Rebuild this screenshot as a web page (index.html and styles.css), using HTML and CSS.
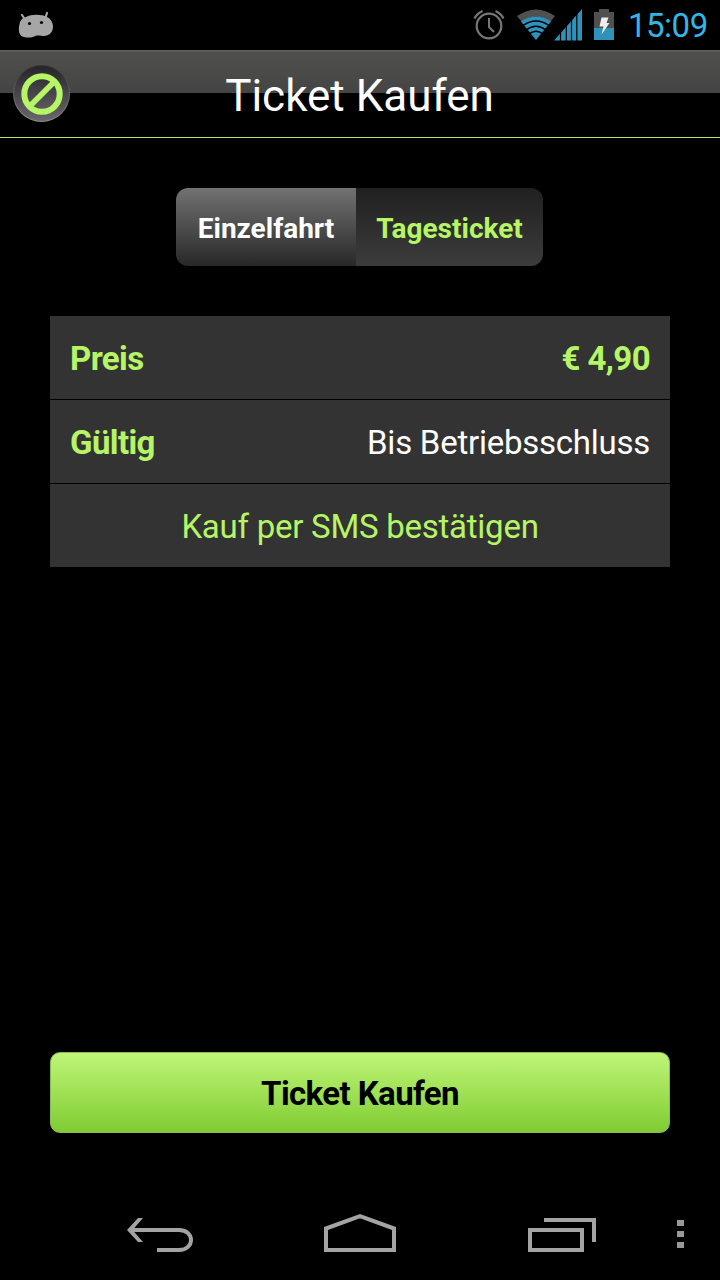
FILE: index.html
```html
<!DOCTYPE html>
<html lang="de">
<head>
    <meta charset="UTF-8">
    <meta name="viewport" content="width=device-width, initial-scale=1.0">
    <title>Ticket Kaufen</title>
    <link rel="stylesheet" href="styles.css">
</head>
<body>
    <div class="status-bar">
        <svg class="icon-android" width="36" height="28" viewBox="0 0 36 28">
            <path d="M4 4l4 6M29 2l-2 6" stroke="#a6a6a6" stroke-width="2.200" stroke-linecap="round"/>
            <path d="M8 6C13 3 24 3 29 6c4 2 6 6 6 10 0 5-4 9-9 9-3 0-5-1-8-.3-4 2-8 2.300-12 1.300-5-1-6-6-4.500-13C2 10 4 7 8 6z" fill="#a6a6a6"/>
            <circle cx="11.500" cy="12.500" r="1.600" fill="#000"/>
            <circle cx="23.500" cy="11.500" r="1.600" fill="#000"/>
        </svg>
        <div class="status-icons">
            <svg class="icon-alarm" width="32" height="32" viewBox="0 0 32 32" fill="none" stroke="#777">
                <circle cx="16" cy="17" r="12.300" stroke-width="2.200"/>
                <path d="M16 9v9l5 5" stroke-width="2"/>
                <path d="M1.500 9.500Q4 4.500 9.500 2M22.500 2Q28 4.500 30.500 9.500" stroke-width="2.200"/>
            </svg>
            <svg class="icon-wifi" width="40" height="32" viewBox="0 0 40 32">
                <path d="M20 31L1 7Q20-6 39 7L34.500 12.800Q20 2.500 5.500 12.800z" fill="#505050"/>
                <path d="M20 31L5 12.500Q20 2.500 35 12.500z" fill="#3092bb"/>
                <g fill="none" stroke="#000" stroke-width="1.400">
                    <path d="M7 16.500Q20 7.500 33 16.500"/>
                    <path d="M10 21Q20 13.500 30 21"/>
                    <path d="M13 25Q20 19.500 27 25"/>
                </g>
            </svg>
            <svg class="icon-signal" width="28" height="32" viewBox="0 0 28 32">
                <path d="M0 31.500L28 0v31.500z" fill="#3092bb"/>
                <path d="M6.500 20v12M12.300 14v18M17.500 8v24M22.800 2v30" stroke="#000" stroke-width="1.200"/>
            </svg>
            <svg class="icon-battery" width="20" height="32" viewBox="0 0 20 32">
                <path d="M5 0h10v3h5v16H0V3h5z" fill="#505050"/>
                <path d="M0 19h20v12H0z" fill="#3092bb"/>
                <path d="M7.500 8.500h7l-2 5.500H15.500L7.500 25.500l2-8H5.500z" fill="#eee"/>
            </svg>
        </div>
        <span class="clock">15:09</span>
    </div>

    <div class="header">
        <button class="cancel-button" aria-label="Abbrechen">
            <svg width="42" height="42" viewBox="0 0 42 42" fill="none" stroke="#b5f566">
                <circle cx="21" cy="21" r="17.700" stroke-width="6"/>
                <path d="M9 33L33 9" stroke-width="5.500"/>
            </svg>
        </button>
        <h1>Ticket Kaufen</h1>
    </div>

    <div class="container">
        <div class="tabs">
            <button class="tab active">Einzelfahrt</button>
            <button class="tab">Tagesticket</button>
        </div>

        <div class="list">
            <div class="row">
                <span class="label">Preis</span>
                <span class="price">€ 4,90</span>
            </div>
            <div class="row">
                <span class="label">Gültig</span>
                <span class="value">Bis Betriebsschluss</span>
            </div>
            <div class="row confirm">Kauf per SMS bestätigen</div>
        </div>

        <button class="buy-button">Ticket Kaufen</button>
    </div>

    <div class="nav-bar">
        <svg class="nav-back" width="68" height="36" viewBox="0 0 68 36" fill="none" stroke="#a3a3a3" stroke-width="4">
            <path d="M5 13H52C68 13 68 33 52 33H30"/>
            <path d="M0 13L11 1h5L5.500 13L16 25h-5z" fill="#a3a3a3" stroke="none"/>
        </svg>
        <svg class="nav-home" width="72" height="38" viewBox="0 0 72 38" fill="none" stroke="#a3a3a3" stroke-width="4">
            <path d="M2 36V14.500L36 2.200L70 14.500V36z"/>
        </svg>
        <svg class="nav-recent" width="68" height="34" viewBox="0 0 68 34" fill="none" stroke="#a3a3a3" stroke-width="4">
            <path d="M2 12H54V32H2zM16 2H66V24"/>
        </svg>
        <svg class="nav-menu" width="7" height="28" viewBox="0 0 7 28" fill="#999">
            <path d="M0 0h7v6H0zM0 11h7v6H0zM0 22h7v6H0z"/>
        </svg>
    </div>
</body>
</html>
```

FILE: styles.css
```css
* {
    box-sizing: border-box;
}
body {
    font-family: Roboto, sans-serif;
    margin: 0;
    height: 1280px;
    background-color: #000;
    color: #fff;
    display: flex;
    flex-direction: column;
    overflow: hidden;
}
svg {
    display: block;
    flex: none;
}
button {
    font-family: inherit;
    border: none;
    padding: 0;
    cursor: pointer;
}
.status-bar {
    height: 50px;
    display: flex;
    align-items: flex-start;
    padding: 9px 12px 0 18px;
}
.icon-android {
    margin-top: 2px;
}
.status-icons {
    display: flex;
    margin-left: auto;
}
.icon-wifi {
    margin-left: 11px;
}
.icon-signal {
    margin-left: -2px;
}
.icon-battery {
    margin-left: 12px;
}
.clock {
    width: 80px;
    margin-left: 14px;
    font-size: 33px;
    letter-spacing: -0.5px;
    line-height: 34px;
    color: #33b5e5;
    white-space: nowrap;
}
.header {
    height: 88px;
    display: grid;
    grid-template-columns: 70px 1fr 70px;
    align-items: start;
    background: linear-gradient(#666 0, #50504e 2px, #444 43px, #000 43px);
    border-bottom: 1px solid #b0ea6c;
}
.header h1 {
    margin: 16px 1px 0 0;
    font-size: 44px;
    line-height: 60px;
    font-weight: 400;
    text-align: center;
}
.cancel-button {
    width: 57px;
    height: 57px;
    margin: 15px 0 0 13px;
    display: flex;
    align-items: center;
    justify-content: center;
    border: 1px solid transparent;
    border-radius: 50%;
    background: linear-gradient(#262428, #69676b) padding-box, linear-gradient(#333, #909090) border-box;
}
.container {
    flex: 1;
    display: flex;
    flex-direction: column;
    padding: 50px 50px 51px;
}
.tabs {
    display: flex;
    align-self: center;
    width: 367px;
    height: 78px;
    margin-right: 1px;
    border-radius: 12px;
    overflow: hidden;
}
.tab {
    width: 187px;
    font-size: 28px;
    font-weight: 700;
    color: #b5f566;
    background: linear-gradient(#202020, #3c3c3c);
    padding-top: 2px;
}
.tab.active {
    width: 180px;
    color: #fff;
    background: linear-gradient(#727272, #282828);
}
.list {
    margin-top: 50px;
}
.row {
    height: 83px;
    display: flex;
    align-items: center;
    justify-content: space-between;
    padding: 2px 20px 0;
    background-color: #333;
    font-size: 33px;
    letter-spacing: -0.25px;
}
.row + .row {
    margin-top: 1px;
}
.label, .price {
    font-weight: 700;
    letter-spacing: -0.6px;
    color: #b5f566;
}
.confirm {
    justify-content: center;
    color: #b5f566;
}
.buy-button {
    height: 81px;
    margin-top: auto;
    padding-top: 1px;
    border: 1px solid #8cba52;
    border-radius: 10px;
    background: linear-gradient(#bff577, #80cc33);
    color: #000;
    font-size: 33px;
    font-weight: 700;
    letter-spacing: -0.6px;
}
.nav-bar {
    height: 96px;
    display: flex;
    align-items: flex-start;
    padding: 30px 0 0 127px;
}
.nav-back {
    margin-top: 3px;
}
.nav-home {
    margin-left: 129px;
}
.nav-recent {
    margin: 4px 0 0 132px;
}
.nav-menu {
    margin: 6px 0 0 81px;
}
```
